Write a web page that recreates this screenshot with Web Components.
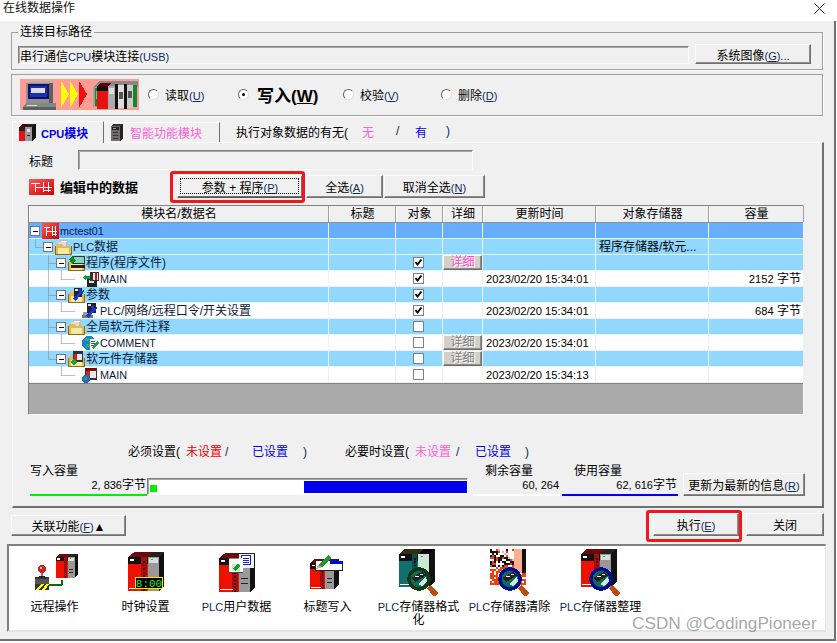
<!DOCTYPE html>
<html lang="zh"><head><meta charset="utf-8"><title>在线数据操作</title>
<style>html,body{margin:0;padding:0;background:#fff;width:837px;height:643px;overflow:hidden}</style></head>
<body><win-app></win-app>
<script>
const FONT='"Liberation Sans","Noto Sans CJK SC",sans-serif';
/* ---------- pixel-art icon parts ---------- */
const R=(x,y,w,h,f)=>`<rect x="${x}" y="${y}" width="${w}" height="${h}" fill="${f}"/>`;
const P=(p,f)=>`<polygon points="${p}" fill="${f}"/>`;
function plc(x,y,s,c){c=Object.assign({top:'#6b0a0a',red:'#f01000',stripe:'#a01010',grey:'#999',side:'#111',grTop:'#222'},c||{});
 const w=19*s,g=11*s,d=6*s,t=5*s,h=38*s;
 let o=P(`${x},${y+t} ${x+d},${y} ${x+w+d},${y} ${x+w},${y+t}`,c.top);
 o+=P(`${x+w},${y+t} ${x+w+d},${y} ${x+w+g+d},${y} ${x+w+g},${y+t}`,c.grTop);
 o+=P(`${x+w+g},${y+t} ${x+w+g+d},${y} ${x+w+g+d},${y+h-d} ${x+w+g},${y+h}`,c.side);
 o+=R(x,y+t,w,h-t,c.red);
 o+=R(x,y+t,w,7*s,'#111');o+=R(x+2*s,y+t+2*s,4*s,2*s,'#fff');
 o+=R(x+w-6*s,y+t,5*s,h-t,c.stripe);
 for(let i=0;i<9;i++)o+=R(x+w-4*s,y+t+(4+i*3.4)*s,1.5*s,1.5*s,'#400');
 o+=R(x+1*s,y+h-3*s,13*s,1*s,'#fff');
 o+=R(x+w,y+t,g,h-t,c.grey);o+=R(x+w+1*s,y+t+1*s,g-2*s,5*s,'#ddd');
 o+=R(x+w+3*s,y+t+2*s,2*s,1*s,'#0c0');o+=R(x+w+2*s,y+t+19*s,g-4*s,1.5*s,'#222');o+=R(x+w+2*s,y+t+24*s,g-4*s,1.5*s,'#222');
 return o}
function lens(x,y,c){c=c||'#000f90';return `<circle cx="${x}" cy="${y}" r="10" fill="#0d6a5c" stroke="${c}" stroke-width="3.4"/>`+
 P(`${x-8},${y-1} ${x+3},${y-7} ${x+8},${y-4} ${x-4},${y+3}`,'#222')+R(x-4,y-3,4,1,'#fff')+R(x+1,y-5,3,1,'#fff')+
 P(`${x-1},${y+5} ${x+7},${y-3} ${x+8},${y+2} ${x+3},${y+7}`,'#cfe9d6')+
 P(`${x+8},${y+9} ${x+11},${y+6} ${x+19},${y+14} ${x+15},${y+18}`,'#c04a10')}
const svg=(w,h,b,extra='')=>`<svg xmlns="http://www.w3.org/2000/svg" width="${w}" height="${h}" viewBox="0 0 ${w} ${h}" shape-rendering="crispEdges" style="display:block;flex:none" ${extra}>${b}</svg>`;
const ladder=(w,h)=>{const m=Math.floor(h/2);return `<defs><linearGradient id="lg" x1="0" y1="0" x2="1" y2="1"><stop offset="0" stop-color="#ff5a5a"/><stop offset="1" stop-color="#d00000"/></linearGradient></defs><rect width="${w}" height="${h}" fill="url(#lg)"/>`+R(2,4,Math.round(w*.36),1,'#fff')+R(Math.round(w*.24),4,1,h-7,'#fff')+R(Math.round(w*.24),m,w-Math.round(w*.24)-2,1,'#fff')+R(Math.round(w*.56),3,1,h-6,'#fff')+R(Math.round(w*.74),3,1,h-6,'#fff')+R(Math.round(w*.56),h-5,Math.round(w*.32),1,'#fff')};
const folder=`${P('1,5 7,5 8,7 16,7 16,16 1,16','#e8b850')}${R(1,15,15,1,'#8a6a10')}${R(0,7,1,9,'#8a6a10')}${R(16,7,1,9,'#8a6a10')}${R(3,9,11,6,'#f8e8a0')}`;
const wrench=(x,y)=>P(`${x},${y+11} ${x+6},${y+4} ${x+5},${y+1} ${x+8},${y} ${x+8},${y+3} ${x+10},${y+3} ${x+10},${y+1} ${x+11},${y+3} ${x+10},${y+6} ${x+8},${y+6} ${x+3},${y+13}`,'#1438d8');
const ICONS={
 root:svg(17,16,ladder(17,16)),
 folder:svg(17,16,R(5,1,8,8,'#bbb')+R(6,2,6,1,'#fff')+R(3,3,8,7,'#ddd')+folder),
 prog:svg(17,16,folder+R(4,1,13,8,'#333')+R(5,2,11,6,'#7fd8c0')+P('1,4 5,1 8,6 4,9','#0a8a20')+R(3,10,14,3,'#222')),
 main:svg(17,16,R(5,8,10,8,'#222')+R(7,9,5,3,'#ddd')+R(8,1,9,9,'#333')+R(11,2,5,7,'#e8e8e8')+R(13,2,2,7,'#c01818')+P('1,6 4,3 4,5 8,5 8,8 4,8 4,10','#10a030')),
 param:svg(17,16,folder+R(6,1,8,9,'#222')+R(7,2,3,2,'#ddd')+wrench(5,1)),
 plcp:svg(17,16,R(1,9,9,5,'#99a')+R(0,12,11,3,'#778')+R(5,0,9,10,'#222')+R(6,1,3,2,'#ddd')+wrench(4,2)),
 comment:svg(17,16,`<circle cx="7" cy="8" r="7" fill="#1880d8"/>`+R(3,3,4,3,'#40b040')+R(4,9,4,3,'#40b040')+R(8,4,8,11,'#eee')+R(9,6,4,1,'#555')+R(9,8,4,1,'#555')+R(9,10,4,1,'#555')+P('10,13 15,6 17,8 12,14','#20a040')),
 mem:svg(17,16,folder+R(5,0,10,11,'#333')+R(6,3,8,6,'#e8e8e8')+R(6,3,3,6,'#d82020')+P('2,11 6,8 9,11 6,15','#20a040')),
 memf:svg(17,16,R(3,1,12,12,'#333')+R(4,4,10,7,'#e8e8e8')+R(4,4,4,7,'#d82020')+R(4,1,10,2,'#800')+`<circle cx="4" cy="12" r="4" fill="#2068c8"/>`+R(2,10,3,3,'#30a840')),
 tabcpu:svg(17,17,R(0,3,6,14,'#e81010')+P('0,3 3,0 9,0 6,3','#500')+R(6,3,7,14,'#999')+P('6,3 9,0 17,0 13,3','#222')+P('13,3 17,0 17,13 13,17','#111')+R(8,5,3,3,'#ddd')+R(8,11,3,1,'#222')+R(0,3,6,4,'#222')),
 tabsm:svg(12,17,R(0,2,9,15,'#6e6e6e')+P('0,2 2,0 12,0 9,2','#333')+P('9,2 12,0 12,14 9,17','#222')+R(1,3,7,3,'#222')+R(2,4,3,1,'#c88')+R(2,8,5,1,'#333')+R(2,11,5,1,'#333')+R(2,14,5,1,'#333')),
 edit:svg(25,16,ladder(25,16))
};
/* top transfer picture, 119x31 */
const TRANSFER=svg(119,31,R(0,0,119,31,'#ff9c94')+
 R(6,4,27,20,'#909090')+P('6,4 10,2 33,2 33,4','#b0b0b0')+R(8,5,21,15,'#101070')+R(10,7,17,11,'#1c30b0')+R(11,9,14,5,'#dde')+R(29,4,4,20,'#606060')+
 P('6,24 3,28 36,28 36,24','#888')+R(3,28,33,3,'#606060')+R(7,26,10,1,'#ddd')+R(22,26,4,1,'#2c2')+
 P('41,2 49,15 41,29','#ffff00')+P('50,2 58,15 50,29','#ffff00')+P('59,2 67,15 59,29','#f01010')+
 P('73,8 80,2 118,2 118,8','#888')+R(73,8,44,20,'#a0a0a0')+R(75,9,5,18,'#0b8a30')+R(76,12,2,8,'#40e070')+
 P('77,7 81,4 92,4 88,7','#600')+R(77,7,11,23,'#e81010')+R(77,7,11,5,'#111')+R(88,7,7,23,'#aaa')+R(89,9,5,6,'#ddd')+
 R(95,5,3,25,'#111')+R(98,6,6,23,'#ddd')+R(99,13,4,7,'#555')+R(104,5,3,25,'#111')+R(107,6,6,23,'#ccc')+R(108,12,4,7,'#555')+R(113,6,4,22,'#0b8a30'));
const TOOLS={
 remote:svg(48,37,plc(25,0,.62)+P('4,23 18,23 18,36 4,36','#333')+R(4,25,14,5,'#555')+P('5,36 10,30 13,30 8,36','#ff0')+P('11,36 15,30 18,30 14,36','#ff0')+R(10,19,2,5,'#778')+R(8,22,6,2,'#222')+`<circle cx="11" cy="15" r="4" fill="#d02020"/>`+R(9,13,2,2,'#fbb')+R(18,30,13,2,'#0a6a10')+R(30,26,2,5,'#0a6a10')),
 clock:0,
 user:svg(36,40,plc(0,0,1.03)+R(20,0,15,15,'#eee')+R(20,0,15,1,'#222')+R(22,2,10,10,'#1020c0')+R(23,3,8,8,'#fff')+R(24,5,6,1,'#12c')+R(24,7,6,1,'#12c')+R(24,9,6,1,'#12c')+R(10,5,14,15,'#fff')+R(10,5,10,1,'#888')+R(10,19,14,1,'#444')+R(13,11,8,7,'#c8e8c8')+P('14,16 19,10 21,13 16,18','#10a030')),
 title:svg(36,36,plc(0,5,.8)+R(5,7,28,10,'#fff')+R(5,16,28,1,'#222')+R(5,7,1,10,'#222')+R(32,7,1,10,'#222')+R(20,7,13,3,'#00f')+P('8,11 18,1 22,4 12,13','#1c9830')+P('6,15 8,11 12,13','#caa')),
 fmt:svg(40,47,plc(0,0,1,{top:'#303010',red:'#107070',stripe:'#075050',grey:'#c8e8d0',grTop:'#101',side:'#111'})+lens(20,30,'#143814')),
 clr:0,
 org:svg(40,47,plc(0,0,1,{})+lens(20,30))
};
TOOLS.clock=`<svg xmlns="http://www.w3.org/2000/svg" width="36" height="40" viewBox="0 0 36 40" style="display:block;flex:none"><g shape-rendering="crispEdges">${plc(0,0,1.03)}${R(7.5,25.5,27,10.5,'#000').replace('/>',' stroke="#ffe600" stroke-width="1"/>')}</g><text x="21" y="34.5" text-anchor="middle" fill="#22ee22" font-family="Liberation Mono,monospace" font-size="11">8:00</text></svg>`;
(function(){let n='';const pal=['#f04010','#fff','#000','#f8b090','#e84800','#fff'];let s=7;
 for(let y=0;y<36;y+=2)for(let x=0;x<36;x+=2){s=(s*31+x*7+y*13)%97;const q=(y/36+(36-x)/60);
  if(x>22&&y<24){n+=R(x,y,2,2,x>30?'#111':'#f8b090');continue}
  const c=q<.55?(s%3?'#fff':pal[s%5]):(s%4==0?'#fff':(s%4==1?'#f04010':(y<18?'#111':'#f04010')));n+=R(x,y,2,2,c)}
 TOOLS.clr=svg(40,47,n+lens(20,30));})();
/* ---------- components ---------- */
const BEV=`border:1px solid;border-color:#fbfbfb #707070 #707070 #fbfbfb;box-shadow:inset -1px -1px 0 #8c8c8c;`;
const SUNK=`border:1px solid;border-color:#808080 #fbfbfb #fbfbfb #808080;box-shadow:inset 1px 1px 0 #a8a8a8;`;
const LAT=s=>s.replace(/[A-Za-z][A-Za-z0-9]*/g,m=>`<span style="font-size:10.8px">${m}</span>`);
const NUM=s=>s.replace(/[0-9/:]+( [0-9:]+)?/g,m=>`<span style="font-size:11.2px">${m}</span>`);
class Base extends HTMLElement{constructor(){super();this.attachShadow({mode:'open'});}}
class XBtn extends Base{connectedCallback(){const f=this.hasAttribute('focus');const ring=this.hasAttribute('ring');
 this.shadowRoot.innerHTML=`<style>:host{display:flex;box-sizing:border-box;position:relative;align-items:center;justify-content:center;background:#f0f0f0;color:#000;font-size:12px;white-space:nowrap;width:var(--w,auto);height:var(--h,23px);flex:none;${BEV}}
 :host([focus]){border-color:#fbfbfb #505050 #505050 #fbfbfb;box-shadow:inset -1px -1px 0 #707070}
 .f{position:absolute;inset:2px 3px 3px 2px;border:1px dotted #000}
 .r{position:absolute;border:3px solid #f01818;border-radius:3px;pointer-events:none;inset:var(--ring)}
 span{display:block}</style>
 ${f?'<div class="f"></div>':''}${ring?'<div class="r"></div>':''}<span><slot></slot></span>`}}
customElements.define('x-btn',XBtn);
class XRadio extends Base{connectedCallback(){this.shadowRoot.innerHTML=`<style>:host{display:flex;align-items:center;gap:6px;flex:none;width:var(--w,auto);font-size:12px}
 i{display:block;box-sizing:border-box;width:11px;height:11px;border-radius:50%;background:#fff;border:1px solid;border-color:#666 #e0e0e0 #e0e0e0 #666;position:relative;flex:none}
 b{position:absolute;left:3px;top:3px;width:3px;height:3px;background:#000;border-radius:50%}
 span{display:block;white-space:nowrap}</style>
 <i>${this.hasAttribute('on')?'<b></b>':''}</i><span><slot></slot></span>`}}
customElements.define('x-radio',XRadio);
class XIcon extends Base{connectedCallback(){const n=this.getAttribute('n');const src=TOOLS[n]||ICONS[n]||(n=='transfer'?TRANSFER:'');
 this.shadowRoot.innerHTML=`<style>:host{display:block;flex:none}</style>${src}`}}
customElements.define('x-icon',XIcon);
class XTool extends Base{connectedCallback(){this.shadowRoot.innerHTML=`<style>:host{display:flex;flex-direction:column;align-items:center;width:91px;flex:none;font-size:12px;line-height:13px;text-align:center;color:#000;box-sizing:border-box}
 .ic{height:50px;display:flex;align-items:flex-start;justify-content:center}.t{margin-top:2px;width:84px}</style>
 <div class="ic"><slot name="i"></slot></div><div class="t"><slot></slot></div>`}}
customElements.define('x-tool',XTool);
const COLS=[300,67,47,40,113,113,95];
class XCheck extends Base{connectedCallback(){const on=this.hasAttribute('on');this.shadowRoot.innerHTML=`<style>:host{display:block;width:11px;height:11px}</style>
 <svg width="11" height="11" viewBox="0 0 11 11" style="display:block"><rect x=".5" y=".5" width="10" height="10" fill="#fff" stroke="#808080"/>${on?'<path d="M2.5 5 L4.5 7.5 L8.5 2.5" fill="none" stroke="#000" stroke-width="2"/>':''}</svg>`}}
customElements.define('x-check',XCheck);
class XRow extends Base{connectedCallback(){
 const a=n=>this.getAttribute(n)||'';
 const lvl=+a('lvl'),leaf=this.hasAttribute('leaf');
 const bg={root:'#66aeff',blue:'#90d8ff',white:'#fff'}[a('bg')];
 const GW=[13,26,39,53][lvl];
 const dot=(x1,y1,x2,y2)=>`<path d="M${x1+.5} ${y1+.5}L${x2+.5} ${y2+.5}" stroke="#808080" stroke-dasharray="1 1" fill="none"/>`;
 let g='';const bx=[6,19,32][lvl];
 if(a('v')){a('v').split(';').forEach(s=>{const[x,y1,y2]=s.split(',').map(Number);g+=dot(x,y1,x,y2)})}
 if(lvl==1)g+=dot(6,0,6,8)+dot(6,8,15,8);
 if(lvl==2)g+=dot(19,8,28,8);
 if(lvl==3)g+=dot(32,-1,32,8)+dot(32,8,46,8);
 if(!leaf)g+=`<rect x="${bx-4.5}" y="3.5" width="9" height="9" fill="#fff" stroke="#777"/><path d="M${bx-2} 8.5h5" stroke="#000"/>`;
 const gutter=`<svg width="${GW}" height="16" viewBox="0 0 ${GW} 16" style="display:block;flex:none;overflow:visible">${g}</svg>`;
 const btn=a('d');
 const btnH=btn?`<x-btn class="d" style="--w:39px;--h:15px;background:#d4d0c8;color:${btn=='p'?'#ff50d0':'#808080'};text-shadow:1px 1px 0 #fff">详细</x-btn>`:'';
 this.shadowRoot.innerHTML=`<style>:host{display:grid;grid-template-columns:${COLS.map(c=>c+'px').join(' ')};height:16px;box-sizing:border-box;background:${bg};font-size:12px;line-height:15px;color:#000;${a('sep')?'box-shadow:0 1px 0 #707070;':''}position:relative}
 .c{box-sizing:border-box;border-right:1px solid #f0f0f0;border-bottom:1px solid #f0f0f0;display:flex;align-items:center;white-space:nowrap;overflow:hidden;height:16px}
 .n{overflow:visible}.ck{justify-content:center;padding-right:2px}.t{padding:1px 0 0 3px}.m{padding:1px 0 0 3px}.r{justify-content:flex-end;padding:1px 2px 0 0}
 .d{padding:0}.lab{margin-left:1px;padding-top:2px;color:#0a1a3a}</style>
 <div class="c n">${gutter}<x-icon n="${a('ic')}"></x-icon><span class="lab">${LAT(a('t'))}</span></div><div class="c"></div>
 <div class="c ck">${a('ck')?`<x-check ${a('ck')=='1'?'on':''}></x-check>`:''}</div>
 <div class="c d">${btnH}</div><div class="c t">${NUM(a('time'))}</div><div class="c m">${a('mem')}</div><div class="c r"><span>${NUM(a('size'))}</span></div>`}}
customElements.define('x-row',XRow);
class XGrid extends Base{connectedCallback(){const H=['模块名/数据名','标题','对象','详细','更新时间','对象存储器','容量'];
 this.shadowRoot.innerHTML=`<style>:host{display:block;box-sizing:border-box;width:776px;height:210px;background:#aaa;border:1px solid;border-color:#808080 #f8f8f8 #f8f8f8 #808080}
 .h{display:grid;grid-template-columns:${COLS.map(c=>c+'px').join(' ')};height:16px;background:#f0f0f0;font-size:12px;line-height:15px;border-bottom:1px solid #909090;box-sizing:content-box}
 .h div{text-align:center;box-sizing:border-box;border-right:1px solid #a0a0a0;border-left:1px solid #fff;height:16px;padding-top:1px}
 .b{border-bottom:1px solid #808080}</style>
 <div class="h">${H.map(t=>`<div>${t}</div>`).join('')}</div><div class="b"><slot></slot></div>`}}
customElements.define('x-grid',XGrid);
class XCap extends Base{connectedCallback(){const a=n=>this.getAttribute(n);
 this.shadowRoot.innerHTML=`<style>:host{display:flex;flex-direction:column;box-sizing:border-box;width:var(--w);height:33px;font-size:12px;line-height:14px;flex:none;border-bottom:2px solid ${a('c')};padding-top:1px}
 .l{padding-left:var(--l,0)}.v{text-align:right;padding-right:1px;margin-top:0}</style>
 <div class="l">${a('l')}</div><div class="v"><slot></slot></div>`}}
customElements.define('x-cap',XCap);
class XPanel extends Base{connectedCallback(){this.shadowRoot.innerHTML=`<style>:host{display:flex;box-sizing:border-box;background:#fff;border:1px solid;border-top:2px solid #808080;border-left:2px solid #808080;border-right:1px solid #e4e4e4;border-bottom:2px solid #e4e4e4;height:88px;width:819px;padding-top:3px}</style><slot></slot>`}}
customElements.define('x-panel',XPanel);
class WinApp extends Base{connectedCallback(){this.shadowRoot.innerHTML=`<style>
:host{display:block;width:837px;height:643px;font-family:${FONT};font-size:12px;color:#000;overflow:hidden;position:relative;background:#fafafa}
*{box-sizing:border-box}u{text-decoration:underline}
i.l{font-style:normal;font-size:11px;color:#0a2a5a}
i.n{font-style:normal;font-size:11px;letter-spacing:0}
i.n em{font-style:normal;letter-spacing:3px}
.title{height:21px;background:#fff;display:flex;justify-content:space-between;padding-left:3px;font-size:12px;line-height:16px;color:#111}
.main{height:620px;width:836px;background:#f0f0f0;border-right:2px solid #707070;border-bottom:2px solid #707070;padding:4px 0 0 11px;display:flex;flex-direction:column}
fieldset{margin:0;width:812px;height:45px;border:1px solid #a0a0a0;box-shadow:1px 1px 0 #fff;padding:0 11px 0 6px;display:flex;align-items:flex-start;gap:6px}
legend{padding:0 2px;margin-left:0;font-size:12px;line-height:14px;height:14px}
.in{height:18px;${SUNK}display:flex;align-items:center;padding-left:1px;background:#f0f0f0;font-size:12px;white-space:pre}
.in span{display:block}
.g2{margin-top:4px;width:812px;height:42px;border:1px solid #a0a0a0;box-shadow:1px 1px 0 #fff;display:flex;align-items:center;padding:0 0 1px 8px}
.tabs{margin-top:5px;height:21px;display:flex;align-items:flex-end;position:relative;margin-left:1px}
.tab{display:flex;align-items:center;border:1px solid;border-color:#fbfbfb #707070 transparent #fbfbfb;border-bottom:0;height:22px;font-size:12px;font-weight:bold;flex:none}
.tabinfo{display:flex;align-items:center;padding-left:16px;height:20px;margin-bottom:1px;white-space:nowrap}
.panel{width:812px;height:366px;margin-left:1px;border:1px solid #fbfbfb;border-right:2px solid #707070;border-bottom:2px solid #707070;padding:7px 0 0 16px;display:flex;flex-direction:column}
.row{display:flex;align-items:center}
.status{display:flex;margin-top:29px;height:16px;line-height:16px;padding-left:99px;white-space:nowrap}
.status span{flex:none}
.caps{display:flex;align-items:flex-end;margin-top:3px;margin-left:1px;height:33px}
.bar{width:321px;height:17px;margin:0 5px 1px 0;flex:none;${SUNK}background:#fff;display:flex;justify-content:space-between;align-items:stretch;padding:2px 0 1px 2px}
.bar i{display:block;width:7px;height:7px;background:#00f000;margin-top:4px}
.bar b{display:block;width:163px;background:#0000f0}
.btns{display:flex;align-items:flex-end;margin-top:5px;height:23px;width:813px}
.sp{flex:1}
.dock{margin:8px 0 0 -4px}
.mark{position:absolute;left:632px;top:613px;font-family:"Liberation Sans",sans-serif;font-size:17.2px;color:rgba(110,110,110,.62);white-space:nowrap;line-height:20px}
</style>
<div class="title"><span>在线数据操作</span><svg width="11" height="11" viewBox="0 0 11 11" style="margin:3px 12px 0 0"><path d="M.5 .5L10.5 10.5M10.5 .5L.5 10.5" stroke="#222" fill="none"/></svg></div>
<div class="main">
 <fieldset><legend>连接目标路径</legend>
  <div class="in" style="width:671px;margin-top:7px"><span>串行通信<i class="l">CPU</i>模块连接<i class="l">(USB)</i></span></div>
  <x-btn style="--w:116px;--h:20px;margin-top:5px">系统图像<i class="l">(<u>G</u>)...</i></x-btn>
 </fieldset>
 <div class="g2"><x-icon n="transfer"></x-icon><span style="width:9px;flex:none"></span>
  <x-radio style="--w:90px">读取<i class="l">(<u>U</u>)</i></x-radio>
  <x-radio on style="--w:105px"><span style="font-size:17px;font-weight:bold;display:inline-block;margin-left:2px">写入(<u>W</u>)</span></x-radio>
  <x-radio style="--w:98px">校验<i class="l">(<u>V</u>)</i></x-radio>
  <x-radio style="--w:80px">删除<i class="l">(<u>D</u>)</i></x-radio></div>
 <div class="tabs">
  <div class="tab" style="width:92px;padding-left:6px;gap:5px;color:#0000f0;position:relative;z-index:1;background:#f0f0f0;height:22px;margin-bottom:-1px"><x-icon n="tabcpu"></x-icon><span><span style="font-size:11px">CPU</span>模块</span></div>
  <div class="tab" style="width:116px;height:20px;padding-left:7px;gap:7px;font-weight:normal;color:#ff60d8;border-left:0"><x-icon n="tabsm"></x-icon><span>智能功能模块</span></div>
  <div class="tabinfo"><span style="width:126px">执行对象数据的有无(</span><span style="color:#ff60d8;width:34px">无</span><span style="width:19px;color:#0a2a5a">/</span><span style="color:#0000f0;width:31px">有</span><span style="color:#0a2a5a">)</span></div>
 </div>
 <div class="panel">
  <div class="row" style="height:20px"><span style="width:49px">标题</span><div class="in" style="width:395px;height:20px"></div></div>
  <div class="row" style="height:23px;margin-top:5px">
   <x-icon n="edit"></x-icon><b style="margin-left:6px;width:117px;flex:none;font-size:13px">编辑中的数据</b>
   <x-btn focus ring style="--w:126px;--ring:-5px -3px -6px -8px">参数 + 程序<i class="l">(<u>P</u>)</i></x-btn>
   <x-btn style="--w:77px;margin-left:3px">全选<i class="l">(<u>A</u>)</i></x-btn>
   <x-btn style="--w:101px;margin-left:1px">取消全选<i class="l">(<u>N</u>)</i></x-btn>
  </div>
  <x-grid style="margin:7px 0 0 -1px">
   <x-row bg="root" lvl="0" ic="root" t="mctest01"></x-row>
   <x-row bg="blue" lvl="1" ic="folder" t="PLC数据" mem="程序存储器/软元..." sep="1"></x-row>
   <x-row bg="blue" lvl="2" ic="prog" t="程序(程序文件)" ck="1" d="p" v="19,0,16"></x-row>
   <x-row bg="white" lvl="3" leaf ic="main" t="MAIN" ck="1" time="2023/02/20 15:34:01" size="2152 字节" v="19,0,16"></x-row>
   <x-row bg="blue" lvl="2" ic="param" t="参数" ck="1" v="19,0,16"></x-row>
   <x-row bg="white" lvl="3" leaf ic="plcp" t="PLC/网络/远程口令/开关设置" ck="1" time="2023/02/20 15:34:01" size="684 字节" v="19,0,16"></x-row>
   <x-row bg="blue" lvl="2" ic="folder" t="全局软元件注释" ck="0" v="19,0,16"></x-row>
   <x-row bg="white" lvl="3" leaf ic="comment" t="COMMENT" ck="0" d="g" time="2023/02/20 15:34:01" v="19,0,16"></x-row>
   <x-row bg="blue" lvl="2" ic="mem" t="软元件存储器" ck="0" d="g" v="19,0,8"></x-row>
   <x-row bg="white" lvl="3" leaf ic="memf" t="MAIN" ck="0" time="2023/02/20 15:34:13"></x-row>
  </x-grid>
  <div class="status">
   <span style="width:58px">必须设置(</span><span style="color:#f00000;width:39px">未设置</span><span style="width:27px;color:#0a2a5a">/</span><span style="color:#0000f0;width:51px">已设置</span><span style="width:42px;color:#0a2a5a">)</span>
   <span style="width:70px">必要时设置(</span><span style="color:#ff60d8;width:41px">未设置</span><span style="width:19px;color:#0a2a5a">/</span><span style="color:#0000f0;width:50px">已设置</span><span style="color:#0a2a5a">)</span>
  </div>
  <div class="caps">
   <x-cap l="写入容量" c="#00f000" style="--w:117px"><i class="n">2<em>,</em>836</i>字节</x-cap>
   <div class="bar"><i></i><b></b></div>
   <x-cap l="剩余容量" c="#ffffff" style="--w:87px;--l:12px"><i class="n">60<em>,</em>264</i></x-cap>
   <x-cap l="使用容量" c="#0000f0" style="--w:116px;--l:12px;margin-left:2px"><i class="n">62<em>,</em>616</i>字节</x-cap>
   <x-btn style="--w:122px;--h:23px;margin:0 0 0 5px;align-self:flex-end">更新为最新的信息<i class="l">(<u>R</u>)</i></x-btn>
  </div>
 </div>
 <div class="btns">
  <x-btn style="--w:115px;--h:21px">关联功能<i class="l">(<u>F</u>)</i>▲</x-btn><div class="sp"></div>
  <x-btn ring style="--w:86px;--h:23px;--ring:-4px -4px -7px -8px">执行<i class="l">(<u>E</u>)</i></x-btn>
  <x-btn style="--w:78px;--h:23px;margin-left:7px">关闭</x-btn>
 </div>
 <div class="dock"><x-panel>
  <x-tool><x-icon slot="i" n="remote" style="margin-top:5px"></x-icon>远程操作</x-tool>
  <x-tool><x-icon slot="i" n="clock" style="margin-top:3px"></x-icon>时钟设置</x-tool>
  <x-tool><x-icon slot="i" n="user" style="margin-top:4px"></x-icon><i class="l">PLC</i>用户数据</x-tool>
  <x-tool><x-icon slot="i" n="title" style="margin-top:5px"></x-icon>标题写入</x-tool>
  <x-tool><x-icon slot="i" n="fmt"></x-icon><i class="l">PLC</i>存储器格式化</x-tool>
  <x-tool><x-icon slot="i" n="clr"></x-icon><i class="l">PLC</i>存储器清除</x-tool>
  <x-tool><x-icon slot="i" n="org"></x-icon><i class="l">PLC</i>存储器整理</x-tool>
 </x-panel></div>
</div>
<div class="mark">CSDN @CodingPioneer</div>`}}
customElements.define('win-app',WinApp);
</script></body></html>
